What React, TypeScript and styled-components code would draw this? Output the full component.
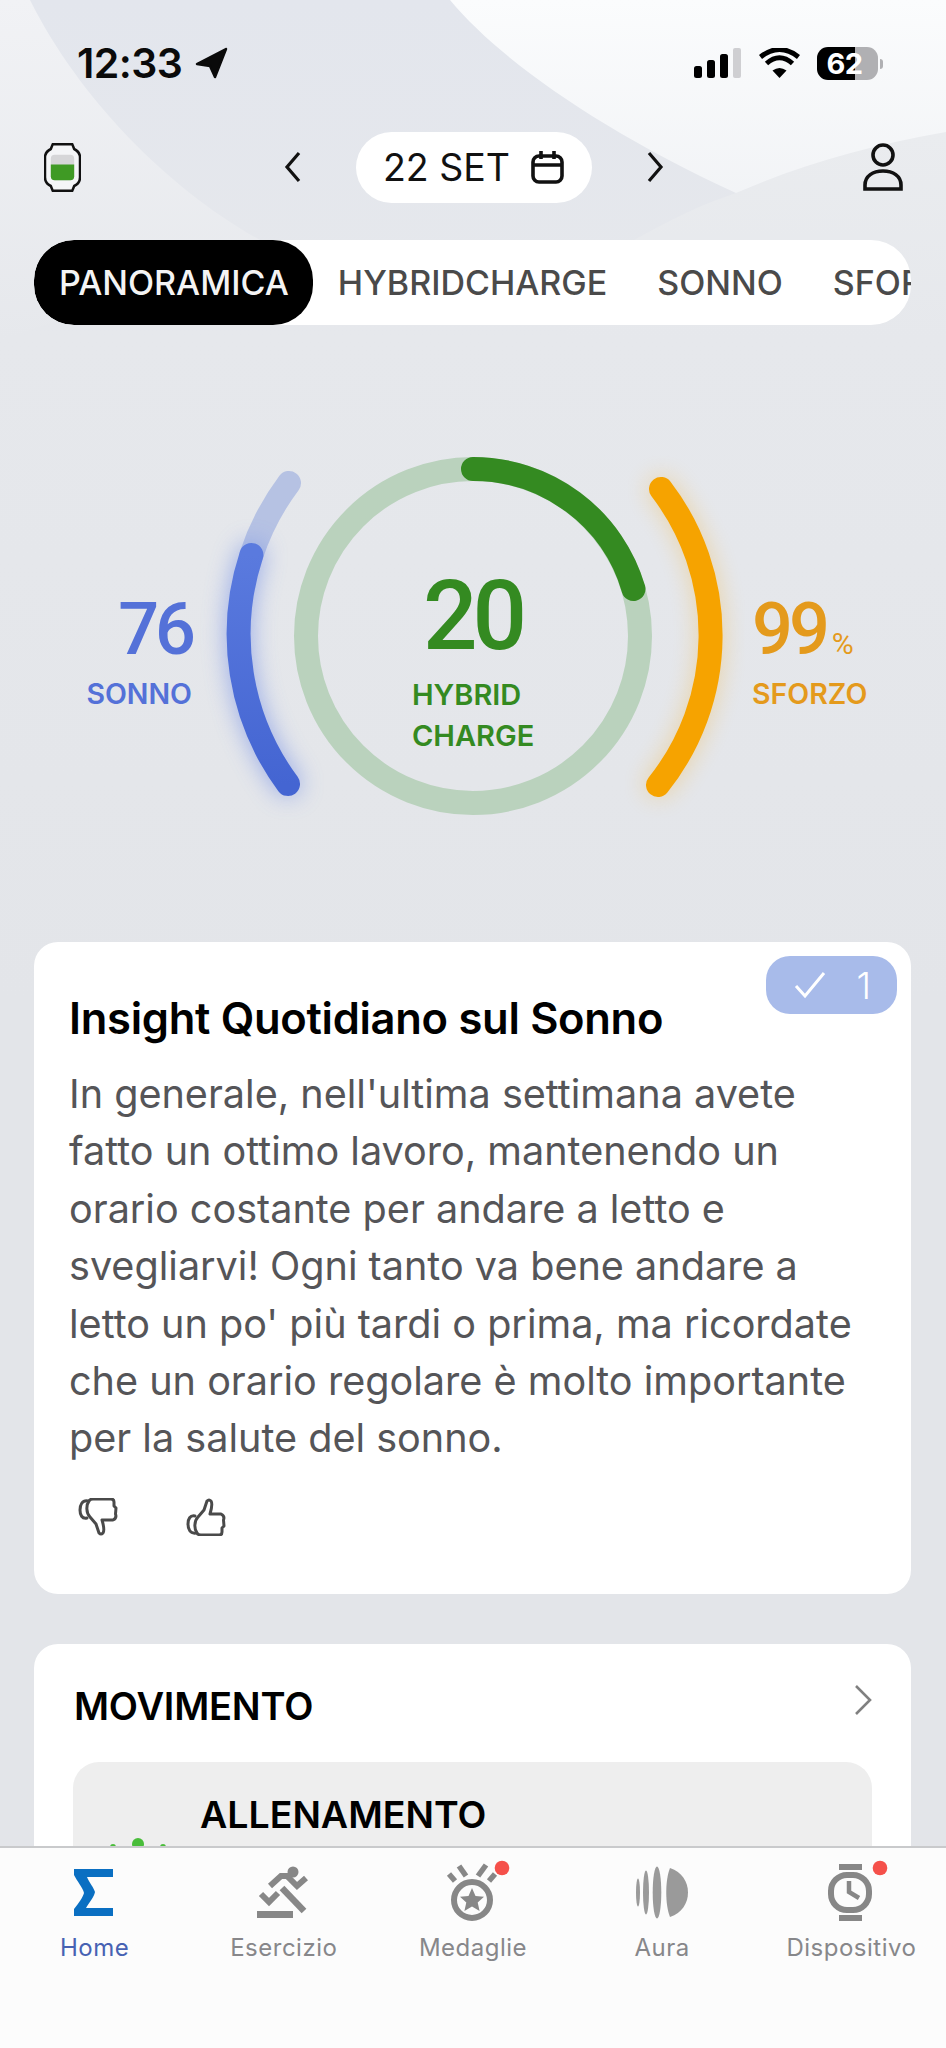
import React from 'react';
import styled, { createGlobalStyle } from 'styled-components';

const Global = createGlobalStyle`
  html, body { margin: 0; padding: 0; background: #e4e6ea; }
  * { box-sizing: border-box; }
`;

const Screen = styled.div`
  position: relative;
  width: 946px;
  height: 2048px;
  overflow: hidden;
  display: flex;
  flex-direction: column;
  font-family: Inter, "Liberation Sans", sans-serif;
  background: linear-gradient(180deg, #e6e8ec 0 340px, #e3e5e9 1000px);
`;
const Decor = styled.svg`
  position: absolute;
  left: 0;
  top: 0;
  width: 946px;
  height: 340px;
`;
const Content = styled.div`
  position: relative;
  flex: 1;
  min-height: 0;
  overflow: hidden;
`;
const StatusBar = styled.div`
  height: 124px;
  display: flex;
  align-items: center;
  justify-content: space-between;
  padding: 2px 68px 0 77px;
`;
const Clock = styled.div`
  display: flex;
  align-items: center;
  gap: 13px;
  font-size: 41px;
  font-weight: 600;
  letter-spacing: -0.6px;
  color: #0a0a0a;
`;
const StatusIcons = styled.div`
  display: flex;
  align-items: center;
  gap: 17px;
`;
const Battery = styled.div`
  position: relative;
  width: 61px;
  height: 33px;
  border-radius: 11px;
  background: linear-gradient(90deg, #000 0 62%, #b0b0b3 62% 100%);
  color: #fff;
  font-size: 29px;
  font-weight: 700;
  line-height: 33px;
  text-align: center;
  padding-right: 6px;
  letter-spacing: -0.5px;
  &::after {
    content: '';
    position: absolute;
    right: -5px;
    top: 12px;
    width: 3px;
    height: 10px;
    border-radius: 0 3px 3px 0;
    background: #b0b0b3;
  }
`;
const Header = styled.div`
  height: 86px;
  display: grid;
  grid-template-columns: 1fr auto 1fr;
  align-items: center;
  padding: 0 43px 0 44px;
`;
const DateNav = styled.div`
  display: flex;
  align-items: center;
  gap: 55px;
`;
const DatePill = styled.div`
  width: 236px;
  height: 71px;
  border-radius: 36px;
  background: #fff;
  display: flex;
  align-items: center;
  justify-content: center;
  gap: 21px;
  font-size: 37.5px;
  color: #111;
`;
const EndSlot = styled.div<{ $end?: boolean }>`
  display: flex;
  justify-content: ${(p) => (p.$end ? 'flex-end' : 'flex-start')};
`;
const TabsStrip = styled.div`
  margin: 30px 35px 0 34px;
  height: 85px;
  border-radius: 40px;
  background: #fff;
  display: flex;
  align-items: center;
  overflow: hidden;
`;
const TabPill = styled.div<{ $active?: boolean }>`
  flex: none;
  height: 85px;
  display: flex;
  align-items: center;
  padding: ${(p) => (p.$active ? '0 24px 0 25px' : '0 25px')};
  border-radius: 40px;
  font-size: 34px;
  font-weight: 500;
  white-space: nowrap;
  background: ${(p) => (p.$active ? '#000' : 'transparent')};
  color: ${(p) => (p.$active ? '#f4f4f4' : '#4a4a4a')};
`;
const Gauge = styled.div`
  margin-top: 111px;
  height: 400px;
  display: grid;
  grid-template-columns: 196px 549px 1fr;
  align-items: center;
`;
const SideLabel = styled.div<{ $color: string; $right?: boolean }>`
  display: flex;
  flex-direction: column;
  align-items: ${(p) => (p.$right ? 'flex-start' : 'flex-end')};
  color: ${(p) => p.$color};
  padding: 34px ${(p) => (p.$right ? '0' : '4px')} 0 ${(p) => (p.$right ? '7px' : '0')};
`;
const Score = styled.div`
  font-family: Roboto, Inter, sans-serif;
  font-size: 72px;
  line-height: 70px;
  font-weight: 500;
  letter-spacing: -4px;
`;
const Percent = styled.span`
  font-size: 30px;
  line-height: 0;
  font-weight: 400;
  letter-spacing: 0;
  margin-left: 6px;
`;
const Caption = styled.div`
  margin-top: 12px;
  font-size: 28.5px;
  line-height: 34px;
  font-weight: 600;
`;
const Dial = styled.div`
  position: relative;
  width: 549px;
  height: 400px;
`;
const DialCentre = styled.div`
  position: absolute;
  left: 216px;
  top: 135px;
  color: #348a21;
  display: flex;
  flex-direction: column;
`;
const BigScore = styled.div`
  font-family: Roboto, Inter, sans-serif;
  font-size: 96px;
  line-height: 90px;
  font-weight: 500;
  letter-spacing: -5px;
  margin-left: 11px;
`;
const CentreCaption = styled.div`
  margin-top: 13px;
  font-size: 29px;
  line-height: 41px;
  font-weight: 600;
`;
const Card = styled.section`
  position: relative;
  margin: 0 35px 0 34px;
  background: #fff;
  border-radius: 24px;
`;
const InsightCard = styled(Card)`
  margin-top: 106px;
  height: 652px;
  padding: 51px 40px 0 35px;
`;
const Badge = styled.div`
  position: absolute;
  right: 14px;
  top: 14px;
  width: 131px;
  height: 58px;
  border-radius: 24px;
  background: #a8bbea;
  display: flex;
  align-items: center;
  justify-content: space-between;
  padding: 0 26px 0 28px;
  color: #fff;
  font-size: 37px;
  font-weight: 300;
`;
const CardTitle = styled.h2`
  margin: 0;
  font-size: 43.5px;
  line-height: 50px;
  font-weight: 600;
  color: #000;
  letter-spacing: -0.3px;
`;
const Body = styled.p`
  margin: 23px 0 0;
  font-size: 39.6px;
  line-height: 57.4px;
  color: #555558;
  font-weight: 400;
`;
const Feedback = styled.div`
  display: flex;
  gap: 68px;
  margin: 30px 0 0 9px;
`;
const MoveCard = styled(Card)`
  margin-top: 50px;
  height: 500px;
  padding: 36px 39px 0 39px;
`;
const MoveHead = styled.div`
  display: flex;
  align-items: center;
  justify-content: space-between;
  height: 52px;
  padding-left: 1px;
  svg { margin-top: -12px; }
`;
const MoveTitle = styled.h2`
  margin: 0;
  font-size: 38px;
  font-weight: 600;
  color: #000;
  letter-spacing: -0.2px;
`;
const Workout = styled.div`
  position: relative;
  margin-top: 30px;
  height: 200px;
  border-radius: 26px;
  background: #eeeeee;
  padding: 30px 0 0 127px;
  font-size: 37.5px;
  line-height: 46px;
  font-weight: 600;
  color: #000;
`;
const Spark = styled.svg`
  position: absolute;
  left: 33px;
  top: 68px;
  width: 70px;
  height: 40px;
`;
const TabBar = styled.nav`
  position: relative;
  height: 202px;
  flex: none;
  background: #fcfcfc;
  border-top: 2px solid #c9cacc;
  display: grid;
  grid-template-columns: repeat(5, 1fr);
  padding-top: 7px;
`;
const NavItem = styled.div<{ $active?: boolean }>`
  display: flex;
  flex-direction: column;
  align-items: center;
  font-size: 24px;
  line-height: 30px;
  letter-spacing: 0.5px;
  color: ${(p) => (p.$active ? '#4762b3' : '#87878a')};
  svg { display: block; }
  span { margin-top: 3px; white-space: nowrap; }
`;

const Gray = '#878787';

const SLine = ({ d, w, c = Gray }: { d: string; w: number; c?: string }) => (
  <path d={d} fill="none" stroke={c} strokeWidth={w} />
);

const icons: Record<string, React.ReactNode> = {
  home: (
    <svg width="90" height="75" viewBox="0 0 90 75">
      <path fill="#0a6fc2" d="M24 14H63V22H37C39 27 44 33 45 37C44 42 39 48 36 53H63V61H24V54C29 48 33 42 34 38C33 33 27 26 24 20Z" />
    </svg>
  ),
  run: (
    <svg width="90" height="75" viewBox="-1 0 90 75">
      <circle cx="53" cy="17" r="5.5" fill={Gray} />
      <rect x="17" y="56" width="36" height="7" fill={Gray} />
      <SLine d="M21 39L29 47L38 38" w={6} />
      <SLine d="M30 31L41 21H47L57 31L66 23" w={6} />
      <SLine d="M42 33L64 56" w={6.5} />
    </svg>
  ),
  medal: (
    <svg width="90" height="75" viewBox="-7 0 90 75">
      <circle cx="37" cy="45" r="18" fill="none" stroke={Gray} strokeWidth="6" />
      <path fill={Gray} d="M37 33L40.5 41L49 41.8L42.7 47.5L44.6 56L37 51.6L29.4 56L31.3 47.5L25 41.8L33.5 41Z" />
      <SLine d="M14 19L20 26" w={5.5} />
      <SLine d="M24 11L31 21" w={5.5} />
      <SLine d="M51 10L43 21" w={5.5} />
      <SLine d="M60 19L54 26" w={5.5} />
      <circle cx="67" cy="13" r="7.3" fill="#f5504a" />
    </svg>
  ),
  aura: (
    <svg width="90" height="75" viewBox="-3 0 90 75" fill="#9a9a9a">
      <ellipse cx="18" cy="37.5" rx="2" ry="14" />
      <ellipse cx="26" cy="37.5" rx="3" ry="22" />
      <ellipse cx="37" cy="37.5" rx="4.3" ry="26" />
      <path d="M50 13C62 17 68 27 68 37.5C68 48 62 58 50 62C45 50 45 25 50 13Z" />
    </svg>
  ),
  device: (
    <svg width="90" height="75" viewBox="-4 0 90 75">
      <rect x="29" y="9" width="23" height="6" fill={Gray} />
      <rect x="29" y="60" width="23" height="6" fill={Gray} />
      <rect x="21" y="20" width="38" height="35" rx="16" fill="none" stroke={Gray} strokeWidth="6" />
      <SLine d="M39 26V37L49 43" w={4.5} />
      <circle cx="70" cy="13" r="7.3" fill="#f5504a" />
    </svg>
  ),
};

const navItems = [
  { key: 'home', label: 'Home', active: true },
  { key: 'run', label: 'Esercizio' },
  { key: 'medal', label: 'Medaglie' },
  { key: 'aura', label: 'Aura' },
  { key: 'device', label: 'Dispositivo' },
];

const Thumb = ({ down }: { down?: boolean }) => (
  <svg width="40" height="38" viewBox="-1 -1 40 38" fill="none" stroke="#4a4a4a" strokeWidth="3" strokeLinejoin="round" strokeLinecap="round">
    <g transform={down ? 'translate(0,36) scale(1,-1)' : undefined}>
      <path d="M8 17C3 16 1 20 1 25C1 30 3 35 9 34" />
      <path d="M10 34C7 30 7 22 11 18L17 11L20 2Q22 0 24 2Q26 5 23 15H34Q38 17 36.500 21L37 27L35 29V33Q35 36 32 36H14Q11 36 10 34Z" />
    </g>
  </svg>
);

export default function App() {
  return (
    <Screen>
      <Global />
      <Decor viewBox="0 0 946 340" preserveAspectRatio="none">
        <defs>
          <linearGradient id="tr" x1="0" y1="0" x2="0" y2="1">
            <stop offset="0" stopColor="#fbfcfd" />
            <stop offset="0.75" stopColor="#eff1f4" />
            <stop offset="1" stopColor="#e6e8ec" />
          </linearGradient>
          <linearGradient id="tl" x1="0" y1="0" x2="0" y2="1">
            <stop offset="0" stopColor="#f1f2f5" />
            <stop offset="1" stopColor="#e6e8ec" />
          </linearGradient>
          <linearGradient id="mid" x1="0" y1="0" x2="0" y2="1">
            <stop offset="0" stopColor="#e3e6ed" />
            <stop offset="1" stopColor="#e6e8ec" />
          </linearGradient>
          <linearGradient id="fade" x1="0" y1="0" x2="0" y2="1">
            <stop offset="0" stopColor="#eaecef" />
            <stop offset="1" stopColor="#e6e8ec" />
          </linearGradient>
        </defs>
        <rect width="946" height="340" fill="url(#tl)" />
        <path d="M450 0H946V340H500Z" fill="url(#tr)" />
        <path d="M30 0H450C500 60 600 130 736 193C810 225 880 248 946 262V340H0C120 300 200 270 260 240C170 190 80 100 30 0Z" fill="url(#mid)" />
        <path d="M634 240C670 220 700 205 736 193C800 165 870 145 946 132V340H560Z" fill="url(#fade)" />
      </Decor>
      <Content>
        <StatusBar>
          <Clock>
            12:33
            <svg width="33" height="32" viewBox="0 0 33 32"><path fill="#0a0a0a" d="M31 2L2 17L15 19L20 30Z" strokeLinejoin="round" stroke="#0a0a0a" strokeWidth="2.500" /></svg>
          </Clock>
          <StatusIcons>
            <svg width="48" height="31" viewBox="0 0 48 31">
              <rect x="0" y="18" width="8" height="12" rx="2.500" fill="#000" />
              <rect x="13" y="12" width="8" height="18" rx="2.500" fill="#000" />
              <rect x="26" y="6" width="8" height="24" rx="2.500" fill="#000" />
              <rect x="39" y="0" width="8" height="30" rx="2" fill="#cfcfd2" />
            </svg>
            <svg width="41" height="31" viewBox="0 0 41 31">
              <path d="M20.500 30L13.500 22.500Q20.500 17.500 27.500 22.500Z" fill="#000" />
              <path d="M7.500 15.500Q20.500 4 33.500 15.500" fill="none" stroke="#000" strokeWidth="5" />
              <path d="M1.500 9Q20.500 -6 39.500 9" fill="none" stroke="#000" strokeWidth="5" />
            </svg>
            <Battery>62</Battery>
          </StatusIcons>
        </StatusBar>
        <Header>
          <EndSlot>
            <svg width="37" height="49" viewBox="0 0 38 50">
              <path d="M9 1H29L31 6C35 8 37 11 37 15V35C37 39 35 42 31 44L29 49H9L7 44C3 42 1 39 1 35V15C1 11 3 8 7 6Z" fill="#f4f5f7" stroke="#111" strokeWidth="2.600" strokeLinejoin="round" />
              <rect x="7" y="12" width="24" height="26" rx="4" fill="#d6d6d8" />
              <path d="M7 22H31V34Q31 38 27 38H11Q7 38 7 34Z" fill="#3f9a24" />
            </svg>
          </EndSlot>
          <DateNav>
            <svg width="17" height="32" viewBox="0 0 17 32"><path d="M15 2L3 16L15 30" fill="none" stroke="#111" strokeWidth="3.200" /></svg>
            <DatePill>
              22 SET
              <svg width="33" height="34" viewBox="0 0 33 34" fill="none" stroke="#111" strokeWidth="3.600">
                <rect x="2" y="6" width="29" height="26" rx="6" />
                <path d="M2 15H31M10 1V9M23 1V9" />
              </svg>
            </DatePill>
            <svg width="17" height="32" viewBox="0 0 17 32"><path d="M2 2L14 16L2 30" fill="none" stroke="#111" strokeWidth="3.200" /></svg>
          </DateNav>
          <EndSlot $end>
            <svg width="40" height="49" viewBox="0 0 40 49" fill="none" stroke="#111" strokeWidth="3.600">
              <circle cx="20" cy="12" r="10" />
              <path d="M2 46V42C2 33 10 28 20 28C30 28 38 33 38 42V46Z" />
            </svg>
          </EndSlot>
        </Header>
        <TabsStrip>
          <TabPill $active>PANORAMICA</TabPill>
          <TabPill>HYBRIDCHARGE</TabPill>
          <TabPill>SONNO</TabPill>
          <TabPill>SFORZO</TabPill>
        </TabsStrip>
        <Gauge>
          <SideLabel $color="#5471d8">
            <Score>76</Score>
            <Caption>SONNO</Caption>
          </SideLabel>
          <Dial>
            <svg width="549" height="400" viewBox="0 0 549 400" fill="none" strokeLinecap="round" strokeWidth="24">
              <defs>
                <linearGradient id="blue" x1="0" y1="0" x2="0" y2="1">
                  <stop offset="0" stopColor="#5a7ade" />
                  <stop offset="1" stopColor="#4465d2" />
                </linearGradient>
                <filter id="glow" x="-150%" y="-20%" width="400%" height="140%">
                  <feGaussianBlur stdDeviation="12" />
                </filter>
              </defs>
              <circle cx="277" cy="200" r="167" stroke="#bad2bd" />
              <path d="M277 33A167 167 0 0 1 437.500 153" stroke="#348a21" />
              <path d="M93 47A252 252 0 0 0 55.400 119" stroke="#b6c2e3" />
              <path d="M55.400 119A252 252 0 0 0 92 348" stroke="#5f7fe6" filter="url(#glow)" opacity="0.6" />
              <path d="M55.400 119A252 252 0 0 0 92 348" stroke="url(#blue)" />
              <path d="M465 53A240 240 0 0 1 462 349" stroke="#f6a300" filter="url(#glow)" opacity="0.3" />
              <path d="M465 53A240 240 0 0 1 462 349" stroke="#f6a300" />
            </svg>
            <DialCentre>
              <BigScore>20</BigScore>
              <CentreCaption>HYBRID<br />CHARGE</CentreCaption>
            </DialCentre>
          </Dial>
          <SideLabel $color="#e49a1c" $right>
            <Score>99<Percent>%</Percent></Score>
            <Caption>SFORZO</Caption>
          </SideLabel>
        </Gauge>
        <InsightCard>
          <Badge>
            <svg width="32" height="28" viewBox="0 0 32 28" fill="none" stroke="#fff" strokeWidth="3"><path d="M2 15L11 25L30 2" /></svg>
            1
          </Badge>
          <CardTitle>Insight Quotidiano sul Sonno</CardTitle>
          <Body>
            In generale, nell'ultima settimana avete fatto un ottimo lavoro, mantenendo un orario costante per andare a letto e svegliarvi! Ogni tanto va bene andare a letto un po' più tardi o prima, ma ricordate che un orario regolare è molto importante per la salute del sonno.
          </Body>
          <Feedback>
            <Thumb down />
            <Thumb />
          </Feedback>
        </InsightCard>
        <MoveCard>
          <MoveHead>
            <MoveTitle>MOVIMENTO</MoveTitle>
            <svg width="18" height="32" viewBox="0 0 18 32"><path d="M2 2L16 16L2 30" fill="none" stroke="#808080" strokeWidth="2.600" /></svg>
          </MoveHead>
          <Workout>
            ALLENAMENTO
            <Spark viewBox="0 0 70 40" fill="#49bd3a">
              <circle cx="7" cy="17" r="3" />
              <circle cx="32" cy="14" r="6" />
              <circle cx="32" cy="30" r="6" />
              <circle cx="57" cy="17" r="3" />
            </Spark>
          </Workout>
        </MoveCard>
      </Content>
      <TabBar>
        {navItems.map((n) => (
          <NavItem key={n.key} $active={n.active}>
            {icons[n.key]}
            <span>{n.label}</span>
          </NavItem>
        ))}
      </TabBar>
    </Screen>
  );
}
